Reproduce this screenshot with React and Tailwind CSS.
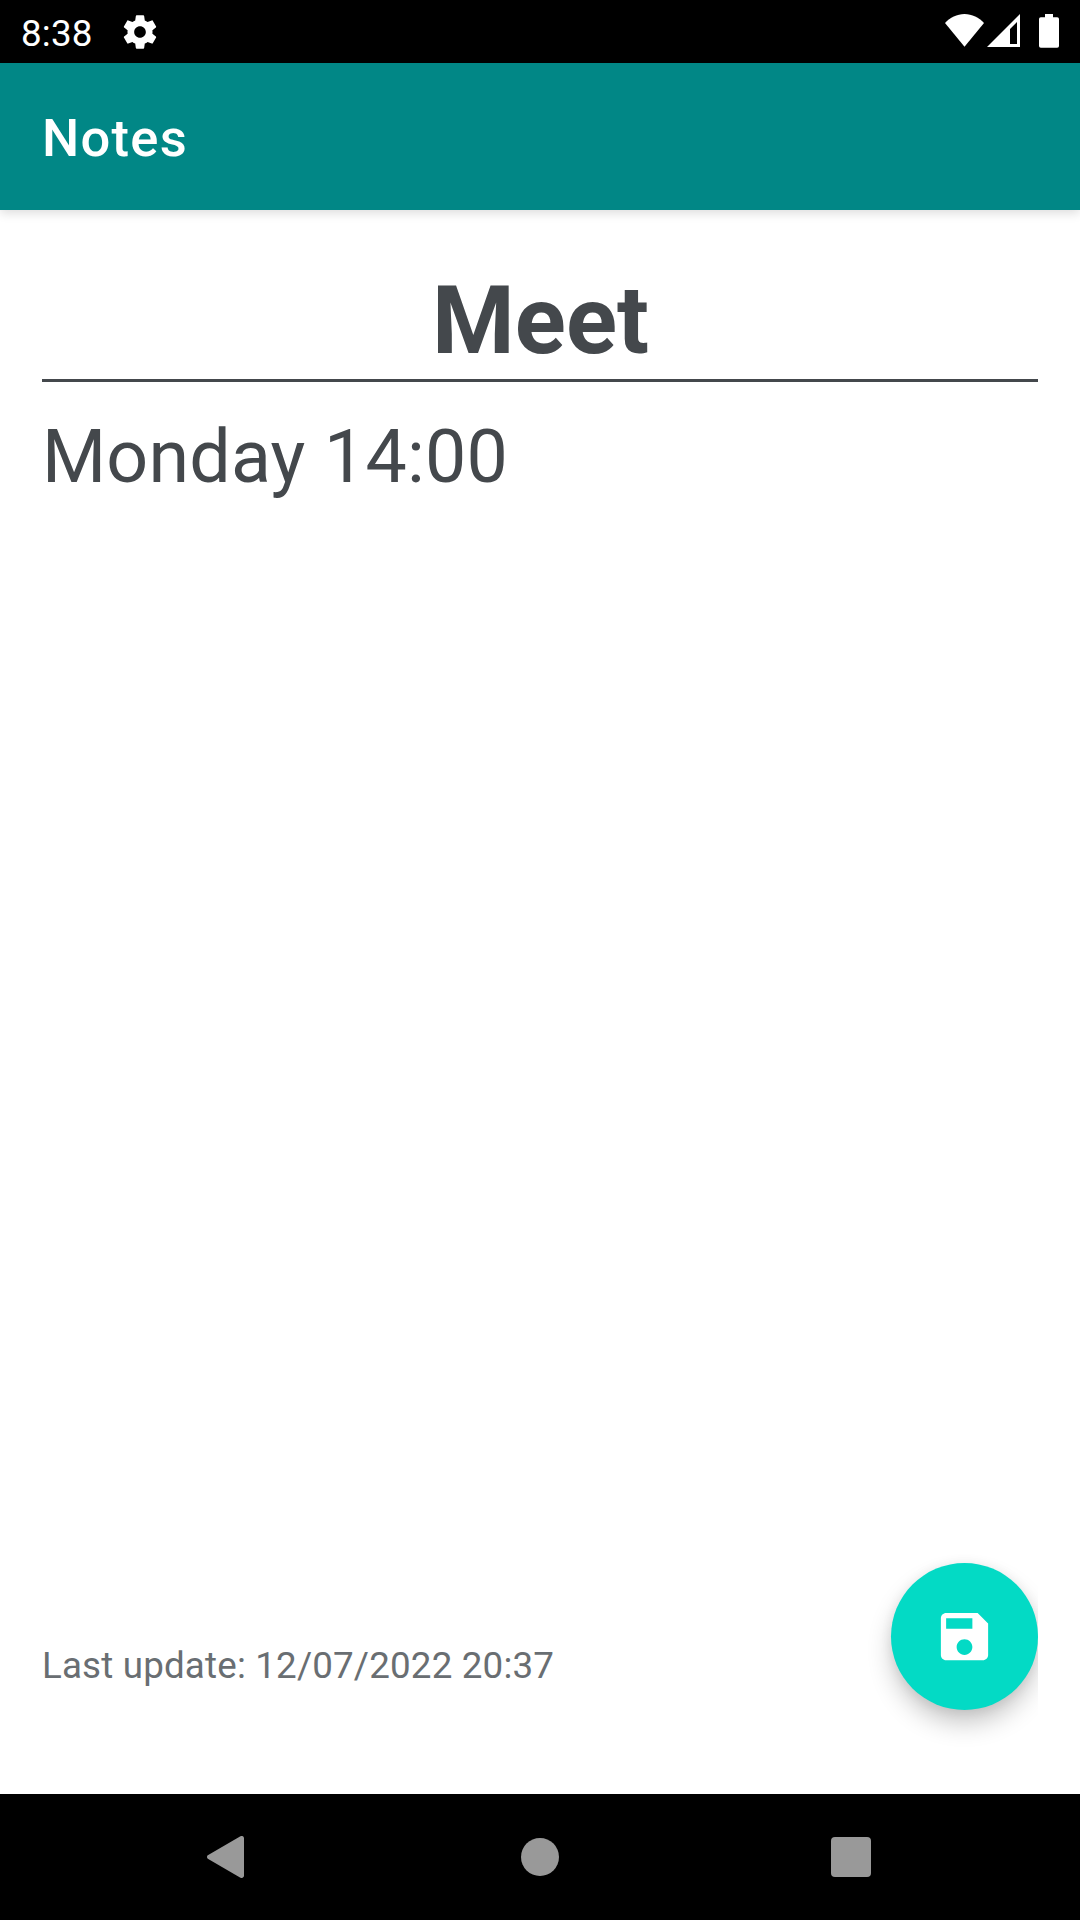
import React from "react";

function StatusBar() {
  return (
    <header className="flex h-[63px] items-start bg-black text-white">
      <span className="ml-[21px] mt-3 w-[71px] whitespace-nowrap text-[36.75px] leading-[43px] tracking-[0.2px]">8:38</span>
      <svg className="ml-[28px] mt-[11.5px] size-10" viewBox="0 0 24 24" fill="currentColor">
        <path d="M19.43 12.98c.04-.32.07-.64.07-.98s-.03-.66-.07-.98l2.11-1.65c.19-.15.24-.42.12-.64l-2-3.46c-.12-.22-.39-.3-.61-.22l-2.49 1c-.52-.4-1.08-.73-1.69-.98l-.38-2.65C14.46 2.18 14.25 2 14 2h-4c-.25 0-.46.18-.49.42l-.38 2.65c-.61.25-1.17.59-1.69.98l-2.49-1c-.23-.09-.49 0-.61.22l-2 3.46c-.13.22-.07.49.12.64l2.11 1.65c-.04.32-.07.65-.07.98s.03.66.07.98l-2.11 1.65c-.19.15-.24.42-.12.64l2 3.46c.12.22.39.3.61.22l2.49-1c.52.4 1.08.73 1.69.98l.38 2.65c.03.24.24.42.49.42h4c.25 0 .46-.18.49-.42l.38-2.65c.61-.25 1.17-.59 1.69-.98l2.49 1c.23.09.49 0 .61-.22l2-3.46c.12-.22.07-.49-.12-.64l-2.11-1.65zM12 15.500c-1.930 0-3.500-1.570-3.500-3.500s1.570-3.500 3.500-3.500 3.500 1.570 3.500 3.500-1.570 3.500-3.500 3.500z" />
      </svg>
      <div className="ml-auto mr-[21px] mt-3.5 flex">
        <svg className="h-[34px] w-[39px]" viewBox="0 0 39 34" fill="currentColor">
          <path d="M19.5 32.8 0 9C5 3.5 12 0 19.5 0S34 3.5 39 9z" />
        </svg>
        <svg className="ml-[3px] h-[34px] w-[33px]" viewBox="0 0 33 34" fill="currentColor">
          <path fillRule="evenodd" d="M0 33 33 0v33zM23 15v15h7V8z" />
        </svg>
        <svg className="ml-[19px] h-[34px] w-5" viewBox="0 0 20 34" fill="currentColor">
          <rect x="6" width="8" height="5" />
          <rect y="3.3" width="20" height="30.5" rx="1.8" />
        </svg>
      </div>
    </header>
  );
}

function SaveButton() {
  return (
    <button
      aria-label="Save"
      className="flex size-[147px] items-center justify-center rounded-full bg-[#03dac5] text-white shadow-[0_14px_26px_-2px_rgba(0,0,0,0.24),0_1px_12px_rgba(0,0,0,0.07)]"
    >
      <svg className="size-[63px]" viewBox="0 0 24 24" fill="currentColor">
        <path d="M17 3H5c-1.11 0-2 .9-2 2v14c0 1.1.89 2 2 2h14c1.1 0 2-.9 2-2V7l-4-4zm-5 16c-1.66 0-3-1.34-3-3s1.34-3 3-3 3 1.34 3 3-1.34 3-3 3zm3-10H5V5h10v4z" />
      </svg>
    </button>
  );
}

function NavigationBar() {
  return (
    <nav className="flex h-[126px] items-center bg-black text-[#999999]">
      <svg className="ml-[207px] h-[42px] w-[37px]" viewBox="0 0 37 42" fill="currentColor">
        <path d="M.8 19.3 33 .4c2-1.1 4-.1 4 2v37.200c0 2.100-2 3.100-4 2L.8 22.700c-1.100-.7-1.100-2.700 0-3.400z" />
      </svg>
      <div className="ml-[277px] size-[38px] rounded-full bg-current" />
      <div className="ml-[272px] size-10 rounded-[4px] bg-current" />
    </nav>
  );
}

export default function App() {
  return (
    <div className="flex h-[1920px] w-[1080px] flex-col overflow-hidden bg-white font-['Roboto',sans-serif]">
      <StatusBar />
      <div className="z-10 flex h-[147px] items-center bg-[#018786] px-[42px] pt-[3px] shadow-[0_3px_10px_rgba(0,0,0,0.14)]">
        <h1 className="text-[52.5px] font-medium leading-[62px] tracking-[1.25px] text-white">Notes</h1>
      </div>
      <main className="mx-[42px] flex flex-1 flex-col overflow-x-clip pt-[55px] text-[#44484c]">
        <h2 className="h-[114px] pl-px text-center text-[94.5px] font-bold leading-[111px]">Meet</h2>
        <div className="h-[3px] bg-[#44484c]" />
        <p className="mt-8 text-[73.5px] leading-[86px] tracking-[0.2px]">Monday 14:00</p>
        <div className="mb-[84px] mt-auto flex items-end justify-between">
          <p className="mb-[23px] text-[36.75px] leading-[43px] tracking-[0.17px] text-[#696e72]">
            Last update: 12/07/2022 20:37
          </p>
          <SaveButton />
        </div>
      </main>
      <NavigationBar />
    </div>
  );
}
